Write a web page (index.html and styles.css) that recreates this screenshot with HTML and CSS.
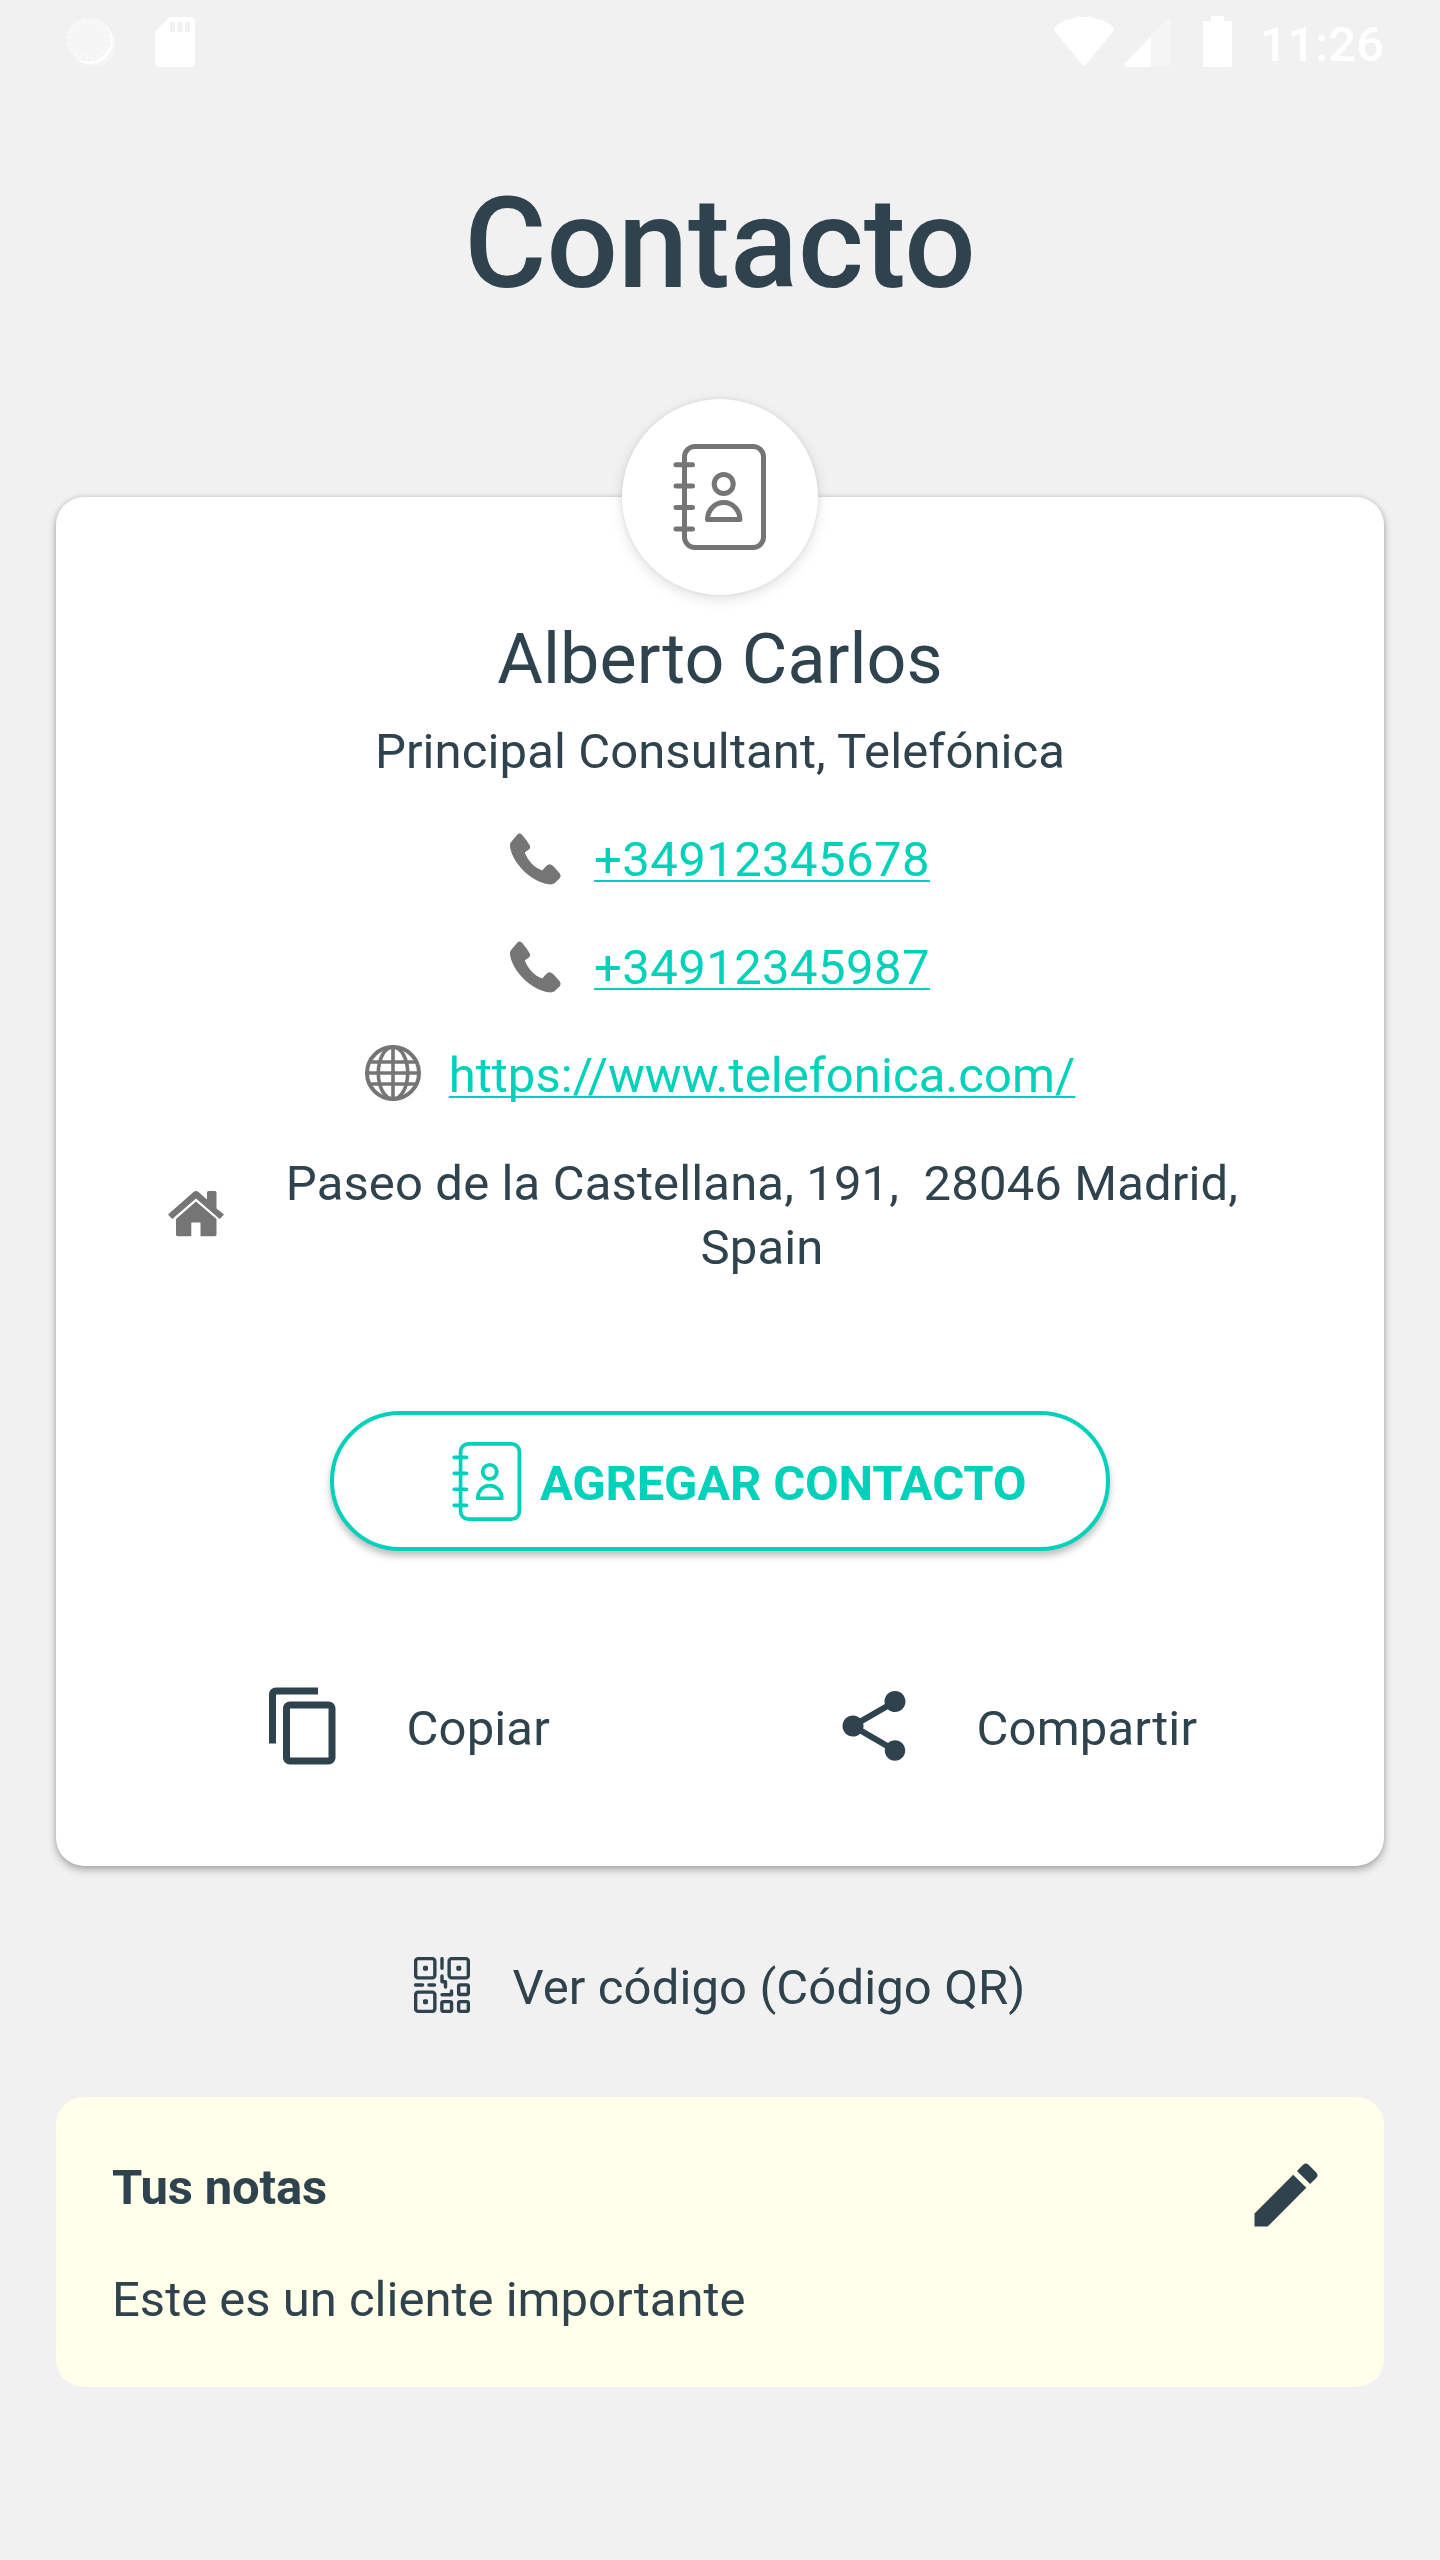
FILE: index.html
```html
<!DOCTYPE html>
<html lang="es">
<head>
    <meta charset="UTF-8">
    <meta name="viewport" content="width=device-width, initial-scale=1.0">
    <title>Contacto</title>
    <link rel="stylesheet" href="styles.css">
</head>
<body>
    <svg class="symbols" width="0" height="0">
        <symbol id="icon-book" viewBox="0 0 94 106">
            <g fill="none" stroke="currentColor" stroke-width="5" stroke-linecap="round" stroke-linejoin="round">
                <rect x="11.5" y="2.5" width="79" height="101" rx="10.5"/>
                <path d="M3 20.7h16.5M3 42h16.5M3 63.4h16.5M3 85h16.5"/>
                <circle cx="50.7" cy="40" r="9.5"/>
                <path d="M34.5 75.5a16.2 17 0 0 1 32.4 0z"/>
            </g>
        </symbol>
        <symbol id="icon-phone" viewBox="0 0 56 56">
            <path d="M7.2 3.8Q9.5 1 12 3.8Q17 9.5 19.8 14.5Q20.8 16.5 19.4 18L14.8 21.5C18 29.5 23.5 36 32.2 39.6L36.5 34.8Q39.5 31.8 42.8 34.8Q46.5 38.3 49.8 42.5Q51.5 45 49.5 47.5L44.5 52.3Q42.5 53.8 39 53.3C20 50.8 2 31 0 15.5Q-.3 12.5 1.5 10.5Z"/>
        </symbol>
    </svg>

    <header class="status-bar">
        <svg class="sync" width="50" height="50" viewBox="0 0 50 50">
            <circle cx="27.5" cy="28" r="22.3" fill="#f5f5f5"/>
            <circle cx="24.5" cy="24.5" r="22.5" fill="#fff"/>
            <circle cx="22.3" cy="22.5" r="22.3" fill="#f5f5f5"/>
            <circle cx="22.3" cy="22.5" r="18" fill="none" stroke="#f8f8f8" stroke-width="6" stroke-dasharray="2.8 2.85"/>
        </svg>
        <svg width="40" height="50" viewBox="0 0 40 50">
            <path fill="#fff" fill-rule="evenodd" d="M15 0h20q5 0 5 5v40q0 5-5 5H5q-5 0-5-5V15zM15 5v10h5V5zM22.5 5v10h5V5zM30 5v10h5V5z"/>
        </svg>
        <div class="status-right">
            <svg class="wifi" width="60" height="50" viewBox="0 0 60 50">
                <path fill="#fff" d="M1.5 9C18-3 42-3 58.5 9Q61 11.5 59 14L33 46.5Q30 50 27 46.5L1 14Q-1 11.5 1.5 9z"/>
            </svg>
            <svg class="signal" width="47" height="50" viewBox="0 0 47 50">
                <path fill="#f5f5f5" d="M27 18L43 2q4-2 4 2v42q0 4-4 4H27z"/>
                <path fill="#fff" d="M27 19.5V50H3q-4-1-2-4z"/>
            </svg>
            <svg class="battery" width="29" height="51" viewBox="0 0 29 51">
                <path fill="#fff" d="M8 0h13v5h6q2 0 2 2v42q0 2-2 2H2q-2 0-2-2V7q0-2 2-2h6z"/>
            </svg>
            <span class="clock">11:26</span>
        </div>
    </header>

    <h1 class="title">Contacto</h1>

    <main class="card">
        <div class="avatar">
            <svg width="94" height="106"><use href="#icon-book"/></svg>
        </div>
        <h2 class="name">Alberto Carlos</h2>
        <p class="job">Principal Consultant, Telefónica</p>

        <div class="info">
            <div class="info-row">
                <svg width="56" height="56"><use href="#icon-phone"/></svg>
                <a class="phone" href="tel:+34912345678">+34912345678</a>
            </div>
            <div class="info-row">
                <svg width="56" height="56"><use href="#icon-phone"/></svg>
                <a class="phone" href="tel:+34912345987">+34912345987</a>
            </div>
            <div class="info-row">
                <svg class="globe" width="56" height="56" viewBox="0 0 56 56">
                    <g fill="none" stroke="currentColor" stroke-width="3.6">
                        <circle cx="28" cy="28" r="26" stroke-width="4"/>
                        <ellipse cx="28" cy="28" rx="14.7" ry="26"/>
                        <path d="M28 2v52M2 28h52M5 17h46M5 39h46"/>
                    </g>
                </svg>
                <a href="https://www.telefonica.com/">https://www.telefonica.com/</a>
            </div>
            <div class="info-row address">
                <svg width="56" height="46" viewBox="0 0 56 46">
                    <path d="M25.5 1Q28 -1 30.5 1L39 8.5V1.5Q39 0 40.5 0H47Q48.5 0 48.5 1.5V17.5L56 23.5L51.7 28L28 7.5L4.3 28L0 23.5Z"/>
                    <path d="M28 10.5L48.5 28V43.5Q48.5 45.2 47 45.2H32.5V31.5H23.3V45.2H9.5Q8 45.2 8 43.5V28Z"/>
                </svg>
                <p>Paseo de la Castellana, 191, &nbsp;28046 Madrid, Spain</p>
            </div>
        </div>

        <button class="add-contact">
            <svg width="70" height="79"><use href="#icon-book"/></svg>
            <span>AGREGAR CONTACTO</span>
        </button>

        <div class="actions">
            <div class="action">
                <svg width="84" height="84" viewBox="0 0 24 24"><path d="M16 1H4c-1.1 0-2 .9-2 2v14h2V3h12V1zm3 4H8c-1.1 0-2 .9-2 2v14c0 1.1.9 2 2 2h11c1.1 0 2-.9 2-2V7c0-1.1-.9-2-2-2zm0 16H8V7h11v14z"/></svg>
                <span>Copiar</span>
            </div>
            <div class="action">
                <svg width="84" height="84" viewBox="0 0 24 24"><path d="M18 16.08c-.76 0-1.44.3-1.96.77L8.91 12.7c.05-.23.09-.46.09-.7s-.04-.47-.09-.7l7.05-4.11c.54.5 1.25.81 2.04.81 1.66 0 3-1.34 3-3s-1.34-3-3-3-3 1.34-3 3c0 .24.04.47.09.7L8.04 9.81C7.5 9.31 6.79 9 6 9c-1.66 0-3 1.34-3 3s1.34 3 3 3c.79 0 1.5-.31 2.04-.81l7.12 4.16c-.05.21-.08.43-.08.65 0 1.61 1.31 2.92 2.92 2.92s2.92-1.31 2.92-2.92-1.31-2.92-2.92-2.92z"/></svg>
                <span>Compartir</span>
            </div>
        </div>
    </main>

    <div class="qr-link">
        <svg width="56" height="56" viewBox="0 0 56 56">
            <g fill="none" stroke="currentColor" stroke-width="3.4" stroke-linecap="round" stroke-linejoin="round">
                <rect x="1.65" y="1.65" width="19.2" height="19.2" rx="2.5"/>
                <rect x="35.15" y="1.65" width="19.2" height="19.2" rx="2.5"/>
                <rect x="1.65" y="35.15" width="19.2" height="19.2" rx="2.5"/>
                <rect x="44.65" y="27.85" width="9.7" height="9.7" rx="1.5"/>
                <rect x="27.85" y="44.65" width="9.7" height="9.7" rx="1.5"/>
                <rect x="44.65" y="44.65" width="9.7" height="9.7" rx="1.5"/>
                <path d="M28 1.65v9.7M1.65 28h7M15 28h5.5M28 19v5.7h3.5V30M37.5 34v3.7H28"/>
            </g>
            <path fill="currentColor" d="M10 8.8h3l1 1v3l-1 1h-3l-1-1v-3zM43.3 8.8h3l1 1v3l-1 1h-3l-1-1v-3zM10 42.3h3l1 1v3l-1 1h-3l-1-1v-3z"/>
        </svg>
        <span>Ver código (Código QR)</span>
    </div>

    <section class="notes">
        <div>
            <h3>Tus notas</h3>
            <p>Este es un cliente importante</p>
        </div>
        <svg width="84" height="84" viewBox="0 0 24 24"><path d="M3 17.25V21h3.75L17.81 9.94l-3.75-3.75L3 17.25zM20.71 7.04c.39-.39.39-1.02 0-1.41l-2.34-2.34c-.39-.39-1.02-.39-1.41 0l-1.83 1.83 3.75 3.75 1.83-1.83z"/></svg>
    </section>
</body>
</html>
```
FILE: styles.css
```css
* {
    box-sizing: border-box;
}
body {
    margin: 0;
    height: 2560px;
    overflow: hidden;
    background-color: #f1f1f1;
    color: #2f434f;
    font-family: Roboto, sans-serif;
    font-size: 49px;
    line-height: 57px;
}
h1, h2, h3, p {
    margin: 0;
}
svg {
    display: block;
    flex: none;
    fill: currentColor;
}
.symbols {
    position: absolute;
}
.status-bar {
    display: flex;
    align-items: flex-start;
    height: 84px;
    padding: 17px 56px 0 66px;
    color: #fff;
}
.sync {
    margin-right: 39px;
}
.status-right {
    display: flex;
    margin-left: auto;
}
.signal {
    margin-left: 10px;
}
.battery {
    margin: -1px 28px 0 32px;
}
.clock {
    font-weight: 500;
    margin-top: -1px;
}
.title {
    margin-top: 86px;
    font-size: 126px;
    font-weight: 500;
    line-height: 148px;
    text-align: center;
}
.card {
    display: flex;
    flex-direction: column;
    align-items: center;
    height: 1369px;
    margin: 179px 56px 0;
    background-color: #fff;
    border-radius: 28px;
    box-shadow: 0 4px 8px rgba(0, 0, 0, 0.28), 0 0 5px rgba(0, 0, 0, 0.12);
}
.avatar {
    display: flex;
    align-items: center;
    justify-content: center;
    width: 196px;
    height: 196px;
    margin-top: -98px;
    border-radius: 50%;
    background-color: #fff;
    color: #757575;
    box-shadow: 0 4px 14px rgba(0, 0, 0, 0.12), 0 0 4px rgba(0, 0, 0, 0.08);
}
.name {
    margin-top: 23px;
    font-size: 70px;
    font-weight: 400;
    line-height: 82px;
    letter-spacing: 0.07px;
}
.job {
    margin-top: 23px;
    letter-spacing: 0.1px;
}
.info {
    display: flex;
    flex-direction: column;
    align-items: center;
    gap: 52px;
    margin-top: 51px;
}
.info-row {
    display: flex;
    align-items: center;
    gap: 28px;
    height: 56px;
}
.info-row svg {
    color: #757575;
}
.info-row a {
    color: #00d1ba;
    text-decoration: underline;
    text-decoration-thickness: 2px;
    text-decoration-skip-ink: none;
    text-underline-offset: 4px;
    letter-spacing: 0.06px;
}
.info-row .phone {
    letter-spacing: 0.45px;
}
.globe {
    margin-top: -5px;
}
.address {
    width: 1104px;
    height: 130px;
    margin-top: -4px;
}
.address svg {
    margin-top: -5px;
}
.address p {
    flex: 1;
    padding: 0 28px;
    line-height: 64.5px;
    letter-spacing: 0.14px;
    text-align: center;
}
.add-contact {
    display: flex;
    align-items: center;
    gap: 18px;
    width: 780px;
    height: 140px;
    margin-top: 130px;
    padding: 0 0 0 118px;
    background-color: #fff;
    border: 4px solid #00d1ba;
    border-radius: 70px;
    box-shadow: 0 5px 7px rgba(0, 0, 0, 0.25);
    color: #00d1ba;
    font-family: inherit;
    font-size: 49px;
    font-weight: 700;
    letter-spacing: -0.2px;
}
.add-contact span {
    padding-top: 4px;
}
.actions {
    display: grid;
    grid-template-columns: 570px 373px;
    width: 943px;
    margin: 133px 0 0 26px;
}
.action {
    display: flex;
    align-items: center;
    gap: 61px;
    letter-spacing: 0.15px;
}
.action span {
    padding-top: 4px;
}
.qr-link {
    display: flex;
    align-items: center;
    justify-content: center;
    gap: 42px;
    margin-top: 88px;
    letter-spacing: 0.12px;
}
.qr-link span {
    padding-top: 5px;
}
.notes {
    display: flex;
    justify-content: space-between;
    height: 290px;
    margin: 81px 56px 0;
    padding: 56px 56px 0;
    background-color: #ffffea;
    border-radius: 28px;
}
.notes h3 {
    margin-top: 6px;
    font-size: 49px;
    font-weight: 700;
    letter-spacing: -0.15px;
}
.notes p {
    margin-top: 55px;
}
```
